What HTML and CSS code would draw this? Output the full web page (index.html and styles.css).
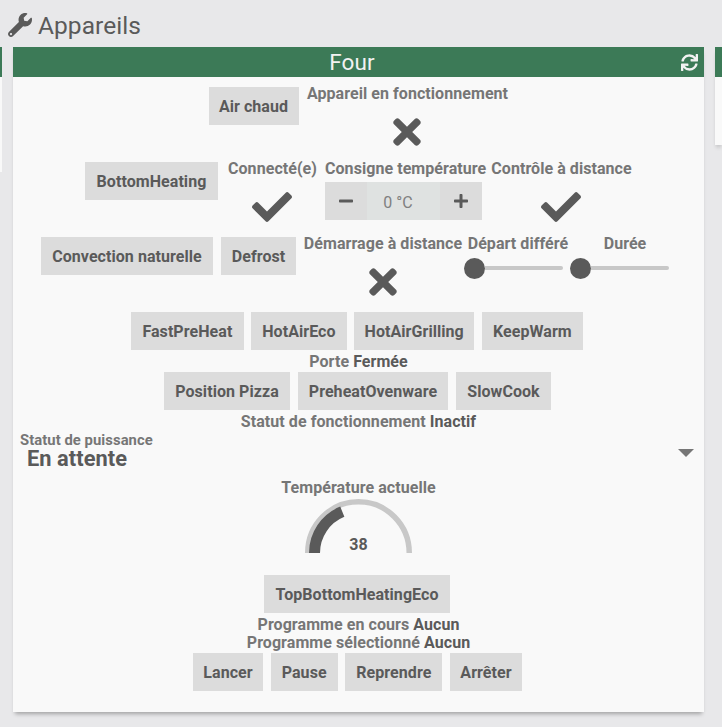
FILE: index.html
```html
<!DOCTYPE html>
<html lang="fr">
<head>
<meta charset="utf-8">
<title>Appareils</title>
<link rel="stylesheet" href="styles.css">
</head>
<body>
<svg class="defs" width="0" height="0">
  <symbol id="check" viewBox="0 0 512 512"><path d="M173.898 439.404l-166.4-166.4c-9.997-9.997-9.997-26.206 0-36.204l36.203-36.204c9.997-9.998 26.207-9.998 36.204 0L192 312.69 432.095 72.596c9.997-9.997 26.207-9.997 36.204 0l36.203 36.204c9.997 9.997 9.997 26.206 0 36.204l-294.4 294.401c-9.998 9.997-26.207 9.997-36.204-.001z"/></symbol>
  <symbol id="times" viewBox="0 0 352 512"><path d="M242.72 256l100.07-100.07c12.28-12.28 12.28-32.19 0-44.48l-22.24-22.24c-12.28-12.28-32.19-12.28-44.48 0L176 189.28 75.93 89.21c-12.28-12.28-32.19-12.28-44.48 0L9.21 111.45c-12.28 12.28-12.28 32.19 0 44.48L109.28 256 9.21 356.07c-12.28 12.28-12.28 32.19 0 44.48l22.24 22.24c12.28 12.28 32.2 12.28 44.48 0L176 322.72l100.07 100.07c12.28 12.28 32.2 12.28 44.48 0l22.24-22.24c12.28-12.28 12.28-32.19 0-44.48L242.72 256z"/></symbol>
</svg>
<h1 class="title">
  <svg class="wrench" viewBox="0 0 512 512"><path d="M507.73 109.1c-2.24-9.03-13.54-12.09-20.12-5.51l-74.36 74.36-67.88-11.31-11.31-67.88 74.36-74.36c6.62-6.62 3.43-17.9-5.66-20.16-47.38-11.74-99.55.91-136.58 37.93-39.64 39.64-50.55 97.1-34.05 147.2L18.74 402.76c-24.99 24.99-24.99 65.51 0 90.5 24.99 24.99 65.51 24.99 90.5 0l213.21-213.21c50.12 16.71 107.47 5.68 147.37-34.22 37.07-37.07 49.7-89.32 37.91-136.73zM64 472c-13.25 0-24-10.75-24-24 0-13.26 10.75-24 24-24s24 10.74 24 24c0 13.25-10.75 24-24 24z"/></svg>
  <span>Appareils</span>
</h1>
<main class="board">
  <section class="card prev"><div class="head"></div></section>
  <section class="card main">
    <header class="head">
      <span class="name">Four</span>
      <svg class="sync" viewBox="0 0 512 512"><path d="M440.65 12.57l4 82.77A247.16 247.16 0 0 0 255.83 8C134.73 8 33.91 94.92 12.29 209.82A12 12 0 0 0 24.09 224h49.05a12 12 0 0 0 11.67-9.26 175.91 175.91 0 0 1 317-56.94l-101.46-4.86a12 12 0 0 0-12.57 12v47.41a12 12 0 0 0 12 12H500a12 12 0 0 0 12-12V12a12 12 0 0 0-12-12h-47.37a12 12 0 0 0-11.98 12.57zM255.83 432a175.61 175.61 0 0 1-146-77.8l101.8 4.87a12 12 0 0 0 12.57-12v-47.4a12 12 0 0 0-12-12H12a12 12 0 0 0-12 12V500a12 12 0 0 0 12 12h47.35a12 12 0 0 0 12-12.6l-4.15-82.57A247.17 247.17 0 0 0 255.83 504c121.11 0 221.93-86.92 243.55-201.82a12 12 0 0 0-11.8-14.18h-49.05a12 12 0 0 0-11.67 9.26A175.86 175.86 0 0 1 255.83 432z"/></svg>
    </header>
    <div class="body">
      <div class="row tall r1">
        <button class="btn">Air chaud</button>
        <div class="item"><span class="label">Appareil en fonctionnement</span><svg class="state"><use href="#times"/></svg></div>
      </div>
      <div class="row tall r2">
        <button class="btn">BottomHeating</button>
        <div class="item"><span class="label">Connecté(e)</span><svg class="state"><use href="#check"/></svg></div>
        <div class="item left"><span class="label">Consigne température</span>
          <div class="stepper">
            <button class="step"><svg viewBox="0 0 448 512"><path d="M416 208H32c-17.67 0-32 14.33-32 32v32c0 17.67 14.33 32 32 32h384c17.67 0 32-14.33 32-32v-32c0-17.67-14.33-32-32-32z"/></svg></button>
            <span class="value">0 °C</span>
            <button class="step"><svg viewBox="0 0 448 512"><path d="M416 208H272V64c0-17.67-14.33-32-32-32h-32c-17.67 0-32 14.33-32 32v144H32c-17.67 0-32 14.33-32 32v32c0 17.67 14.33 32 32 32h144v144c0 17.67 14.33 32 32 32h32c17.67 0 32-14.33 32-32V304h144c17.67 0 32-14.33 32-32v-32c0-17.67-14.33-32-32-32z"/></svg></button>
          </div>
        </div>
        <div class="item"><span class="label">Contrôle à distance</span><svg class="state"><use href="#check"/></svg></div>
      </div>
      <div class="row tall r3">
        <button class="btn">Convection naturelle</button>
        <button class="btn">Defrost</button>
        <div class="item"><span class="label">Démarrage à distance</span><svg class="state"><use href="#times"/></svg></div>
        <div class="item"><span class="label">Départ différé</span><div class="slider"><i class="knob"></i><i class="track"></i></div></div>
        <div class="item"><span class="label">Durée</span><div class="slider"><i class="knob"></i><i class="track"></i></div></div>
      </div>
      <div class="row r4">
        <button class="btn">FastPreHeat</button>
        <button class="btn">HotAirEco</button>
        <button class="btn">HotAirGrilling</button>
        <button class="btn">KeepWarm</button>
      </div>
      <p class="info"><span class="label">Porte</span> Fermée</p>
      <div class="row r5">
        <button class="btn">Position Pizza</button>
        <button class="btn">PreheatOvenware</button>
        <button class="btn">SlowCook</button>
      </div>
      <p class="info"><span class="label">Statut de fonctionnement</span> Inactif</p>
      <div class="select">
        <div>
          <div class="caption">Statut de puissance</div>
          <div class="choice">En attente</div>
        </div>
        <svg class="caret" viewBox="0 0 16 8"><path d="M0 0h16L8 8z"/></svg>
      </div>
      <div class="gauge">
        <span class="label">Température actuelle</span>
        <div class="dial">
          <svg viewBox="0 0 108 54"><path class="ring" d="M2.75 54A50.75 51.25 0 0 1 104.25 54"/><path class="arc" d="M9.5 54A44.5 44.5 0 0 1 37.3 12.7"/></svg>
          <span class="reading">38</span>
        </div>
      </div>
      <div class="row r6"><button class="btn">TopBottomHeatingEco</button></div>
      <p class="info tight"><span class="label">Programme en cours</span> Aucun</p>
      <p class="info tight"><span class="label">Programme sélectionné</span> Aucun</p>
      <div class="row r7">
        <button class="btn">Lancer</button>
        <button class="btn">Pause</button>
        <button class="btn">Reprendre</button>
        <button class="btn">Arrêter</button>
      </div>
    </div>
  </section>
  <section class="card next"><div class="head"></div></section>
</main>
</body>
</html>
```
FILE: styles.css
```css
* { box-sizing: border-box; }
body {
  margin: 0;
  height: 727px;
  overflow: hidden;
  background: #e8e8ea;
  color: #5a5a5a;
  font: 700 16px/18px Roboto, sans-serif;
  letter-spacing: .06px;
}
svg { display: block; fill: #5a5a5a; }
.defs { position: absolute; }
.title {
  display: flex;
  align-items: center;
  gap: 6px;
  margin: 0;
  height: 47px;
  padding: 5px 0 0 8px;
  font-size: 24.5px;
  line-height: 30px;
  font-weight: 400;
}
.wrench { width: 24px; height: 24px; margin-top: -3px; }
.board {
  display: grid;
  grid-template-columns: 2px 691px 7px;
  column-gap: 11px;
  align-items: start;
}
.card { background: #f9f9f9; box-shadow: 0 4px 4px -2px rgba(0, 0, 0, .3); }
.prev { height: 125px; }
.main { height: 665px; }
.next { height: 98px; }
.head {
  display: flex;
  align-items: center;
  height: 30px;
  background: #3c7a57;
  color: #f2f2f2;
}
.name {
  flex: 1;
  padding: 0 0 0 5px;
  text-align: center;
  font-size: 22.5px;
  font-weight: 400;
  margin-right: -5px;
}
.sync { width: 17px; height: 17px; margin-right: 6px; fill: #f2f2f2; }
.body { padding-top: 10px; }
.row { display: grid; justify-content: center; column-gap: 8px; height: 38px; }
.tall { height: 75px; }
.r1 { grid-template-columns: 90px 202px; }
.r2 { grid-template-columns: 133px 97px 161px 141px; column-gap: 5px; }
.r2 .item:nth-child(2) { padding-left: 2px; }
.r3 { grid-template-columns: 174px 77px 158px 100px 102px; column-gap: 6px; }
.r3 .btn { margin-right: 2px; }
.r4 { grid-template-columns: 112.5px 95.25px 120px 101px; column-gap: 7.67px; padding-right: 3px; }
.r5 { grid-template-columns: 126px 150px 95px; padding-right: 2px; }
.r6 { grid-template-columns: 186px; padding-right: 3px; }
.r7 { grid-template-columns: 70px 67px 97px 72px; column-gap: 7.67px; padding-right: 2px; margin-top: 2px; }
.btn, .step {
  border: 0;
  padding: 0;
  background: #dcdcdc;
  color: inherit;
  font: inherit;
  letter-spacing: inherit;
  white-space: nowrap;
}
.btn { height: 38px; padding-top: 1px; }
.item { display: flex; flex-direction: column; align-items: center; margin-top: -2px; }
.left { align-items: flex-start; }
.label { color: #767676; white-space: nowrap; }
.state { width: 40px; height: 40px; margin: 9px 1px 0 0; }
.stepper { display: flex; height: 38px; margin-top: 4px; }
.step { display: flex; align-items: center; justify-content: center; width: 42px; }
.step svg { width: 14px; height: 16px; }
.step:last-child { padding-right: 1px; }
.value {
  width: 73px;
  background: #dfe2e1;
  color: #808080;
  font-weight: 400;
  line-height: 41px;
  text-align: center;
  padding-right: 11px;
}
.slider { display: flex; align-items: center; align-self: flex-start; width: 98.5px; height: 22px; margin: 4px 0 0 -4px; }
.knob { width: 21px; height: 21px; border-radius: 50%; background: #5a5a5a; }
.track { flex: 1; height: 4px; border-radius: 0 2px 2px 0; background: #c8c8c8; }
.info { margin: 3px 0 1px; height: 18px; text-align: center; white-space: nowrap; }
.select {
  display: flex;
  justify-content: space-between;
  height: 44px;
  padding: 0 10px 0 7px;
}
.caption { color: #767676; font-size: 14.8px; line-height: 16px; }
.choice { padding-left: 7px; font-size: 21.8px; line-height: 22px; }
.caret { width: 16px; height: 8px; margin-top: 17px; fill: #767676; }
.gauge { display: flex; flex-direction: column; align-items: center; height: 99px; padding-top: 3px; }
.dial { display: grid; width: 108px; height: 54px; margin-top: 2px; }
.dial > * { grid-area: 1 / 1; }
.dial path { fill: none; }
.ring { stroke: #c8c8c8; stroke-width: 5.5; }
.dial .arc { stroke: #5a5a5a; stroke-width: 11; }
.reading { place-self: end center; line-height: 16px; }
.tight { margin: 0; }
.r6 + .tight { margin-top: 3px; }
.tight + .r7 { margin-top: 1px; }
```
